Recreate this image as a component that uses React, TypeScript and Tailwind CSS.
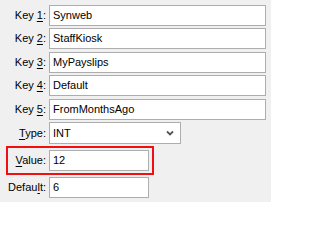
import React from "react";

const font = { fontFamily: '"Liberation Sans", Arial, sans-serif' };

function Label({ pre, key1, post }: { pre: string; key1: string; post: string }) {
  return (
    <span className="text-[11px] text-black leading-none whitespace-nowrap">
      {pre}
      <span className="underline underline-offset-2">{key1}</span>
      {post}
    </span>
  );
}

function Field({ value, w = "w-[217px]" }: { value: string; w?: string }) {
  return (
    <div
      className={`${w} h-[21px] bg-white border border-[#adadad] flex items-center pl-[3px] text-[11px] text-black`}
    >
      {value}
    </div>
  );
}

export default function App() {
  const keys = [
    { n: "1", v: "Synweb", mt: "mt-[5px]" },
    { n: "2", v: "StaffKiosk", mt: "mt-[2px]" },
    { n: "3", v: "MyPayslips", mt: "mt-[3px]" },
    { n: "4", v: "Default", mt: "mt-[2px]" },
    { n: "5", v: "FromMonthsAgo", mt: "mt-[3px]" },
  ];
  return (
    <div className="w-[271px] h-[202px] bg-[#f0f0f0] overflow-hidden flex flex-col" style={font}>
      {keys.map((k) => (
        <div key={k.n} className={`flex items-center ${k.mt}`}>
          <div className="w-[47px] pr-[1px] flex justify-end">
            <Label pre="Key " key1={k.n} post=":" />
          </div>
          <div className="ml-[2px]">
            <Field value={k.v} />
          </div>
        </div>
      ))}

      <div className="flex items-center mt-[2px]">
        <div className="w-[47px] pr-[1px] flex justify-end">
          <Label pre="" key1="T" post="ype:" />
        </div>
        <div className="ml-[2px] w-[132px] h-[22px] bg-white border border-[#adadad] flex items-center justify-between pl-[3px] pr-[6px] text-[11px] text-black">
          <span>INT</span>
          <svg width="8" height="6" viewBox="0 0 8 6">
            <path d="M1 1.5 L4 4.5 L7 1.5" stroke="#555" strokeWidth="1.8" fill="none" />
          </svg>
        </div>
      </div>

      <div className="flex mt-[2px] ml-[6px]">
        <div className="border-2 border-[#f01010] flex items-center py-[2px] pr-[3px]">
          <div className="w-[39px] pr-[1px] flex justify-end">
            <Label pre="" key1="V" post="alue:" />
          </div>
          <div className="ml-[2px]">
            <Field value="12" w="w-[100px]" />
          </div>
        </div>
      </div>

      <div className="flex items-center mt-[2px]">
        <div className="w-[47px] pr-[1px] flex justify-end">
          <Label pre="Defau" key1="l" post="t:" />
        </div>
        <div className="ml-[2px]">
          <Field value="6" w="w-[100px]" />
        </div>
      </div>
    </div>
  );
}
